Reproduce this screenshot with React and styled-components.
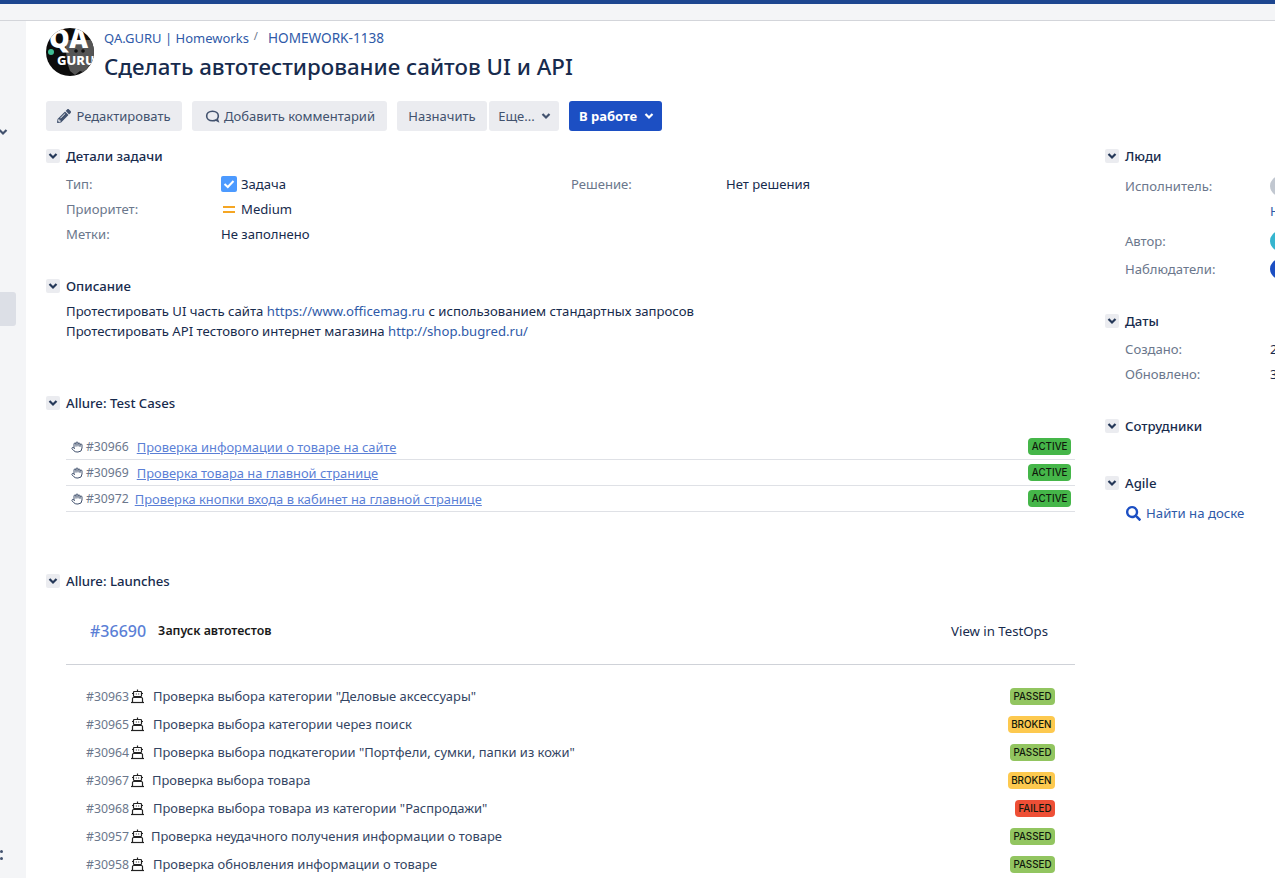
import styled, { createGlobalStyle } from 'styled-components';
import { FaPencilAlt, FaSearch } from 'react-icons/fa';
import { Hand } from 'lucide-react';

const GlobalStyle = createGlobalStyle`
  html, body { margin: 0; padding: 0; height: 100%; overflow: hidden; background: #fff; }
  body { font-family: "Noto Sans", "Liberation Sans", sans-serif; font-size: 13px; color: #172b4d; }
  a { text-decoration: none; }
`;

const Page = styled.div`
  width: 1275px;
  height: 878px;
  overflow: hidden;
  display: flex;
  flex-direction: column;
`;
const TopBar = styled.div`
  height: 4px;
  flex: none;
  background: #1d4690;
`;
const SubBar = styled.div`
  height: 16px;
  flex: none;
  background: #f4f5f7;
  border-bottom: 1px solid #d3d5da;
`;
const Body = styled.div`
  flex: 1;
  display: flex;
  min-height: 0;
`;
const Sidebar = styled.aside`
  width: 26px;
  flex: none;
  background: #f4f5f7;
  display: flex;
  flex-direction: column;
  overflow: hidden;
`;
const SideChevron = styled.div`
  height: 8px;
  margin-top: 106px;
  margin-left: -2px;
  color: #42526e;
  display: flex;
`;
const SideActive = styled.div`
  width: 16px;
  height: 34px;
  margin-top: 157px;
  background: #dcdfe6;
  border-radius: 0 3px 3px 0;
`;
const SideDots = styled.div`
  width: 3px;
  margin-top: 524px;
  display: flex;
  flex-direction: column;
  gap: 4px;
  i { width: 3px; height: 3px; background: #42526e; border-radius: 50%; }
`;
const Content = styled.main`
  flex: 1;
  padding: 7px 0 0 20px;
  min-width: 0;
  overflow: hidden;
`;
const Header = styled.header`
  display: flex;
  gap: 10px;
  height: 48px;
`;
const Logo = styled.svg`
  width: 48px;
  height: 48px;
  flex: none;
`;
const HeaderText = styled.div`
  display: flex;
  flex-direction: column;
`;
const Crumbs = styled.div`
  height: 20px;
  display: flex;
  align-items: center;
  span { color: #6b778c; margin: -4px 10px 0 5px; font-size: 11px; }
`;
const CrumbLink = styled.a`
  color: #2f5aa8;
  font-size: ${(p) => p.$size}px;
`;
const Title = styled.h1`
  margin: 1px 0 0;
  height: 38px;
  line-height: 38px;
  font-size: 22.3px;
  font-weight: 500;
  color: #172b4d;
  white-space: nowrap;
`;
const Toolbar = styled.div`
  display: flex;
  margin-top: 25px;
  height: 30px;
`;
const ToolButton = styled.div`
  height: 30px;
  width: ${(p) => p.$w}px;
  margin-right: ${(p) => p.$gap ?? 10}px;
  padding-left: ${(p) => p.$pad ?? 0}px;
  box-sizing: border-box;
  flex: none;
  border-radius: 3px;
  background: ${(p) => (p.$primary ? '#1c4fc3' : '#ebecf0')};
  color: ${(p) => (p.$primary ? '#fff' : '#42526e')};
  font-weight: ${(p) => (p.$primary ? 700 : 400)};
  display: flex;
  align-items: center;
  justify-content: center;
  gap: ${(p) => p.$inner ?? 5}px;
  font-size: 13px;
  white-space: nowrap;
`;
const Columns = styled.div`
  display: flex;
`;
const MainCol = styled.div`
  width: 1029px;
  flex: none;
`;
const SideCol = styled.div`
  width: 170px;
  flex: none;
  margin-left: 30px;
  overflow: hidden;
`;
const Section = styled.section`
  margin-top: ${(p) => p.$top}px;
`;
const SectionHead = styled.div`
  display: flex;
  align-items: center;
  gap: 6px;
  height: 20px;
  font-size: 13.2px;
  font-weight: 500;
  color: #172b4d;
  white-space: nowrap;
`;
const Toggle = styled.div`
  width: 14px;
  height: 14px;
  background: #ebecf0;
  border-radius: 2px;
  color: #253858;
  display: flex;
  align-items: center;
  justify-content: center;
`;
const DetailGrid = styled.div`
  display: grid;
  grid-template-columns: 155px 350px 155px 1fr;
  grid-auto-rows: 25px;
  margin: 5px 0 0 20px;
  align-items: center;
  font-size: 13.1px;
`;
const Label = styled.div`
  color: #6b778c;
  white-space: nowrap;
`;
const Value = styled.div`
  display: flex;
  align-items: center;
  gap: 4px;
  color: #172b4d;
  white-space: nowrap;
`;
const Desc = styled.div`
  margin: 5px 0 0 20px;
  font-size: 13.15px;
  line-height: 20px;
  color: #172b4d;
  a { color: #2f5aa8; }
`;
const CaseList = styled.div`
  margin: 21px 0 0 20px;
`;
const CaseRow = styled.div`
  height: 25px;
  border-bottom: 1px solid #dfe1e6;
  display: flex;
  align-items: center;
  padding: 0 4px 0 5px;
`;
const CaseId = styled.span`
  color: #6b778c;
  font-size: 12.2px;
  margin: 0 ${(p) => p.$gap}px 0 3px;
`;
const CaseLink = styled.a`
  color: #5b7fd6;
  text-decoration: underline;
  font-size: 12.9px;
`;
const Badge = styled.span`
  margin-left: auto;
  height: 17px;
  line-height: 17px;
  padding: 0 3.5px;
  border-radius: 4px;
  font-family: Inter, "Liberation Sans", sans-serif;
  font-size: 9.8px;
  font-weight: 500;
  color: #10180c;
  background: ${(p) => p.$bg};
`;
const LaunchHead = styled.div`
  margin: 20px 0 0 20px;
  height: 44px;
  border-bottom: 1px solid #cfd2d8;
  display: flex;
  align-items: flex-start;
  padding: 9px 27px 0 24px;
  box-sizing: content-box;
`;
const LaunchNum = styled.a`
  color: #5b7fd6;
  font-size: 16px;
  font-weight: 500;
  line-height: 22px;
  margin-right: 12px;
`;
const LaunchName = styled.div`
  font-size: 12.4px;
  font-weight: 600;
  line-height: 22px;
  color: #1a1a1a;
`;
const TestOps = styled.div`
  margin-left: auto;
  font-size: 13.2px;
  line-height: 22px;
  color: #172b4d;
`;
const Launches = styled.div`
  margin: 17px 20px 0 40px;
`;
const LaunchRow = styled.div`
  height: 28px;
  display: flex;
  align-items: center;
`;
const LaunchId = styled.span`
  color: #6b778c;
  font-size: 12.3px;
  width: 44px;
  flex: none;
`;
const RobotWrap = styled.svg`
  width: 15px;
  height: 15px;
  flex: none;
`;
const LaunchTitle = styled.span`
  margin-left: ${(p) => p.$ml}px;
  font-size: 12.95px;
  color: #344563;
  white-space: nowrap;
`;
const SideGrid = styled.div`
  display: grid;
  grid-template-columns: 145px 1fr;
  margin: ${(p) => p.$top}px 0 0 20px;
  font-size: 13.1px;
  white-space: nowrap;
  align-items: center;
`;
const Cell = styled.div`
  height: ${(p) => p.$h}px;
  display: flex;
  align-items: center;
  color: ${(p) => p.$c || '#6b778c'};
`;
const Avatar = styled.div`
  width: 20px;
  height: 20px;
  flex: none;
  border-radius: 50%;
  background: ${(p) => p.$bg};
`;
const AgileLink = styled.a`
  margin: 11px 0 0 21px;
  display: flex;
  align-items: center;
  gap: 5px;
  font-size: 13.2px;
  color: #2f5aa8;
  white-space: nowrap;
`;

const Chevron = ({ size = 10 }) => (
  <svg width={size} height={size} viewBox="0 0 10 10" fill="none" stroke="currentColor" strokeWidth="2.2">
    <path d="M1.5 3 L5 6.5 L8.5 3" />
  </svg>
);

const Robot = () => (
  <RobotWrap viewBox="0 0 15 15" fill="none" stroke="#222" strokeWidth="1.2">
    <path d="M7.5 0.5 V2.5" />
    <rect x="3.5" y="2.5" width="8" height="5" rx="0.8" />
    <path d="M2 4.500h1.500M11.500 4.500H13" />
    <path d="M5.800 5h1M8.200 5h1" />
    <path d="M2.500 13V9.500Q2.500 8.500 3.500 8.500H11.500Q12.500 8.500 12.500 9.500V13" />
    <path d="M1 13.500h13" />
  </RobotWrap>
);

const cases = [
  { id: '#30966', gap: 8, title: 'Проверка информации о товаре на сайте' },
  { id: '#30969', gap: 8, title: 'Проверка товара на главной странице' },
  { id: '#30972', gap: 6, title: 'Проверка кнопки входа в кабинет на главной странице' },
];

const statusColors = { PASSED: '#92c560', BROKEN: '#fdc94f', FAILED: '#ee4f36' };

const launches = [
  { id: '#30963', ml: 8, title: 'Проверка выбора категории "Деловые аксессуары"', status: 'PASSED' },
  { id: '#30965', ml: 8, title: 'Проверка выбора категории через поиск', status: 'BROKEN' },
  { id: '#30964', ml: 8, title: 'Проверка выбора подкатегории "Портфели, сумки, папки из кожи"', status: 'PASSED' },
  { id: '#30967', ml: 7, title: 'Проверка выбора товара', status: 'BROKEN' },
  { id: '#30968', ml: 8, title: 'Проверка выбора товара из категории "Распродажи"', status: 'FAILED' },
  { id: '#30957', ml: 6, title: 'Проверка неудачного получения информации о товаре', status: 'PASSED' },
  { id: '#30958', ml: 8, title: 'Проверка обновления информации о товаре', status: 'PASSED' },
];

const Head = ({ children }) => (
  <SectionHead>
    <Toggle><Chevron /></Toggle>
    {children}
  </SectionHead>
);

export default function App() {
  return (
    <Page>
      <GlobalStyle />
      <TopBar />
      <SubBar />
      <Body>
        <Sidebar>
          <SideChevron><Chevron /></SideChevron>
          <SideActive />
          <SideDots><i /><i /></SideDots>
        </Sidebar>
        <Content>
          <Header>
            <Logo viewBox="0 0 48 48">
              <defs>
                <clipPath id="logoClip"><circle cx="24" cy="24" r="24" /></clipPath>
              </defs>
              <g clipPath="url(#logoClip)">
                <rect width="48" height="48" fill="#0c0c0c" />
                <path d="M19 12 h29 v24 l-6 3 -2 6 -6 -2 -5 4 -5 -4 -3 -9 z" fill="#555" />
                <circle cx="30" cy="23" r="1.800" fill="#111" />
                <circle cx="37" cy="23" r="1.800" fill="#111" />
                <circle cx="5" cy="24" r="3" fill="#3fbf95" />
                <text x="3" y="20" fontFamily="Noto Sans" fontWeight="900" fontSize="26" fill="#fff">QA</text>
                <text x="11" y="37" fontFamily="Noto Sans" fontWeight="800" fontSize="13" fill="#fff">GURU</text>
              </g>
            </Logo>
            <HeaderText>
              <Crumbs>
                <CrumbLink $size={13}>QA.GURU | Homeworks</CrumbLink><span>/</span><CrumbLink $size={13.6}>HOMEWORK-1138</CrumbLink>
              </Crumbs>
              <Title>Сделать автотестирование сайтов UI и API</Title>
            </HeaderText>
          </Header>
          <Toolbar>
            <ToolButton $w={136}><FaPencilAlt size={14} color="#42526e" />Редактировать</ToolButton>
            <ToolButton $w={195} $inner={3}>
              <svg width="17" height="17" viewBox="0 0 16 16" fill="none" stroke="#42526e" strokeWidth="1.5">
                <path d="M8 3C4.600 3 2.500 5 2.500 7.500S4.600 12 8 12c1.300 0 2.300-.2 3.200-.7l2 1-.7-2c.6-.8 1-1.700 1-2.800C13.500 5 11.400 3 8 3z" />
              </svg>
              Добавить комментарий
            </ToolButton>
            <ToolButton $w={90} $gap={2}>Назначить</ToolButton>
            <ToolButton $w={70} $inner={6} $pad={1}>Еще...<Chevron /></ToolButton>
            <ToolButton $w={93} $primary $gap={0} $inner={7} $pad={2}>В работе<Chevron /></ToolButton>
          </Toolbar>
          <Columns>
            <MainCol>
              <Section $top={15}>
                <Head>Детали задачи</Head>
                <DetailGrid>
                  <Label>Тип:</Label>
                  <Value>
                    <svg width="16" height="16" viewBox="0 0 16 16">
                      <rect width="16" height="16" rx="2" fill="#4c9aff" />
                      <path d="M3.500 8 L6.800 11 L12.500 5" fill="none" stroke="#fff" strokeWidth="2" />
                    </svg>
                    Задача
                  </Value>
                  <Label>Решение:</Label>
                  <Value>Нет решения</Value>
                  <Label>Приоритет:</Label>
                  <Value>
                    <svg width="16" height="16" viewBox="0 0 16 16">
                      <path d="M2 5h12v2H2zM2 10h12v2H2z" fill="#f5a623" />
                    </svg>
                    Medium
                  </Value>
                  <span />
                  <span />
                  <Label>Метки:</Label>
                  <Value>Не заполнено</Value>
                </DetailGrid>
              </Section>
              <Section $top={30}>
                <Head>Описание</Head>
                <Desc>
                  Протестировать UI часть сайта <a>https://www.officemag.ru</a> с использованием стандартных запросов
                  <br />
                  Протестировать API тестового интернет магазина <a>http://shop.bugred.ru/</a>
                </Desc>
              </Section>
              <Section $top={52}>
                <Head>Allure: Test Cases</Head>
                <CaseList>
                  {cases.map((c) => (
                    <CaseRow key={c.id}>
                      <Hand size={12} color="#42526e" />
                      <CaseId $gap={c.gap}>{c.id}</CaseId>
                      <CaseLink>{c.title}</CaseLink>
                      <Badge $bg="#45b649">ACTIVE</Badge>
                    </CaseRow>
                  ))}
                </CaseList>
              </Section>
              <Section $top={59}>
                <Head>Allure: Launches</Head>
                <LaunchHead>
                  <LaunchNum>#36690</LaunchNum>
                  <LaunchName>Запуск автотестов</LaunchName>
                  <TestOps>View in TestOps</TestOps>
                </LaunchHead>
                <Launches>
                  {launches.map((l) => (
                    <LaunchRow key={l.id}>
                      <LaunchId>{l.id}</LaunchId>
                      <Robot />
                      <LaunchTitle $ml={l.ml}>{l.title}</LaunchTitle>
                      <Badge $bg={statusColors[l.status]}>{l.status}</Badge>
                    </LaunchRow>
                  ))}
                </Launches>
              </Section>
            </MainCol>
            <SideCol>
              <Section $top={15}>
                <Head>Люди</Head>
                <SideGrid $top={7}>
                  <Cell $h={25}>Исполнитель:</Cell>
                  <Cell $h={25}><Avatar $bg="#c1c7d0" /></Cell>
                  <span />
                  <Cell $h={26} $c="#2f5aa8">Н</Cell>
                  <Cell $h={34}>Автор:</Cell>
                  <Cell $h={34}><Avatar $bg="#36b5cf" /></Cell>
                  <Cell $h={22}>Наблюдатели:</Cell>
                  <Cell $h={22}><Avatar $bg="#1c4fc3" /></Cell>
                </SideGrid>
              </Section>
              <Section $top={31}>
                <Head>Даты</Head>
                <SideGrid $top={5}>
                  <Cell $h={25}>Создано:</Cell>
                  <Cell $h={25} $c="#172b4d">2</Cell>
                  <Cell $h={25}>Обновлено:</Cell>
                  <Cell $h={25} $c="#172b4d">3</Cell>
                </SideGrid>
              </Section>
              <Section $top={30}>
                <Head>Сотрудники</Head>
              </Section>
              <Section $top={37}>
                <Head>Agile</Head>
                <AgileLink><FaSearch size={15} color="#1c4fc3" />Найти на доске</AgileLink>
              </Section>
            </SideCol>
          </Columns>
        </Content>
      </Body>
    </Page>
  );
}
